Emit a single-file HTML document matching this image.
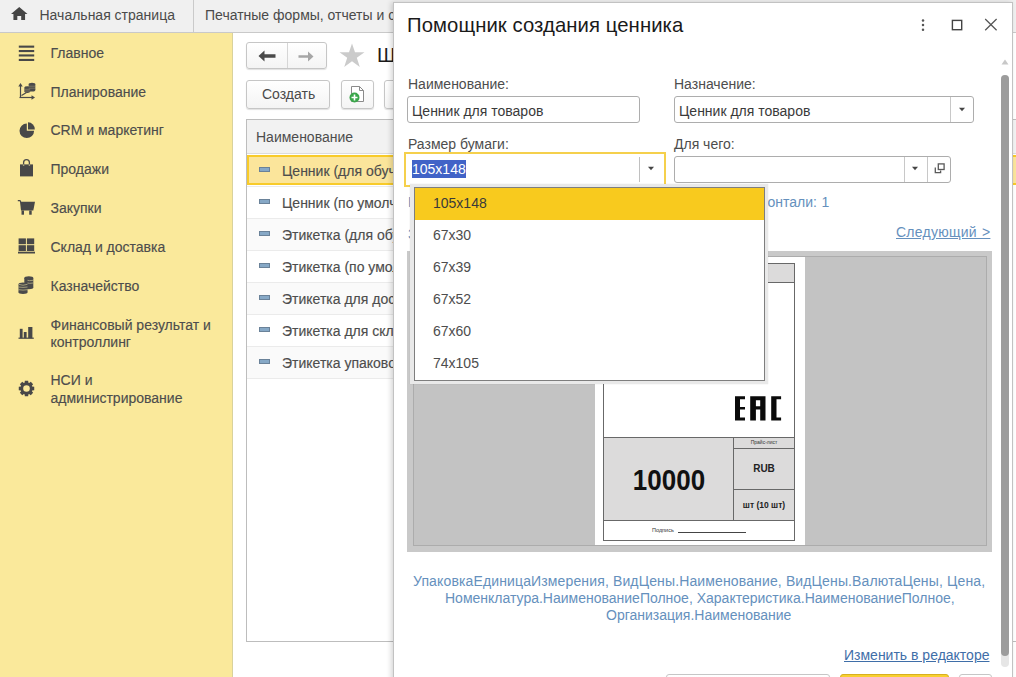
<!DOCTYPE html>
<html><head><meta charset="utf-8">
<style>
*{box-sizing:border-box;margin:0;padding:0}
html,body{width:1016px;height:677px;overflow:hidden;background:#fff;font-family:"Liberation Sans",sans-serif;font-size:14px;color:#4d4d4d}
.a{position:absolute}
.t{position:absolute;white-space:nowrap;line-height:16px;height:16px}
#topbar{left:0;top:0;width:1016px;height:33px;background:#f0f0f0;border-bottom:1px solid #c9c9c9}
#side{left:0;top:33px;width:233px;height:644px;background:#fae99b;border-right:1px solid #d9d29c}
.ic{position:absolute}
.btn{position:absolute;background:linear-gradient(#fff,#f4f4f4);border:1px solid #c6c6c6;border-radius:3px;box-shadow:0 1px 1px rgba(0,0,0,.12)}
.inp{position:absolute;background:#fff;border:1px solid #adadad;border-radius:3px}
.lbl{color:#4d4d4d}
.hv{-webkit-text-stroke:0.15px currentColor}
.dash{position:absolute;left:259px;width:11px;height:4.5px;background:#86a8c6;border:1px solid #6a8299}
</style></head><body>

<!-- TOP BAR -->
<div id="topbar" class="a"></div>
<svg class="ic" style="left:11px;top:7px" width="16.5" height="13.2" viewBox="0 0 17 14" preserveAspectRatio="none"><path d="M8.5 0 L17 7.5 L14.5 7.5 L14.5 14 L10.5 14 L10.5 9.5 L6.5 9.5 L6.5 14 L2.5 14 L2.5 7.5 L0 7.5 Z" fill="#454545"/></svg>
<div class="t" style="left:39.5px;top:6.5px;color:#4a4a4a">Начальная страница</div>
<div class="a" style="left:193px;top:0;width:1px;height:32px;background:#cacaca"></div>
<div class="t" style="left:205px;top:7px;color:#4a4a4a">Печатные формы, отчеты и с</div>

<!-- SIDEBAR -->
<div id="side" class="a"></div>
<div class="t hv" style="left:50.5px;top:45px">Главное</div>
<div class="t hv" style="left:50.5px;top:84px">Планирование</div>
<div class="t hv" style="left:50.5px;top:122px">CRM и маркетинг</div>
<div class="t hv" style="left:50.5px;top:161px">Продажи</div>
<div class="t hv" style="left:50.5px;top:200px">Закупки</div>
<div class="t hv" style="left:50.5px;top:239px">Склад и доставка</div>
<div class="t hv" style="left:50.5px;top:278px">Казначейство</div>
<div class="t hv" style="left:50.5px;top:317px">Финансовый результат и</div>
<div class="t hv" style="left:50.5px;top:334px">контроллинг</div>
<div class="t hv" style="left:50.5px;top:372px">НСИ и</div>
<div class="t hv" style="left:50.5px;top:390px">администрирование</div>


<!-- sidebar icons -->
<svg class="ic" style="left:18px;top:45px" width="17" height="16" viewBox="0 0 17 16"><g fill="#484848"><rect x="0.8" y="0.6" width="15.4" height="2.1"/><rect x="0.8" y="5" width="15.4" height="2.1"/><rect x="0.8" y="9.4" width="15.4" height="2.1"/><rect x="0.8" y="13.9" width="15.4" height="2.1"/></g></svg>
<svg class="ic" style="left:17px;top:81px" width="19" height="20" viewBox="0 0 19 20"><g fill="none" stroke="#4a4a4a" stroke-width="1.2"><path d="M3.5 4 V17"/><path d="M2.5 16.5 H15.5"/><path d="M4.5 14.5 L9.5 11.5"/></g><g fill="#4a4a4a"><path d="M1.3 5.5 L3.5 2 L5.7 5.5 Z"/><path d="M14.5 14.3 L18 16.5 L14.5 18.7 Z"/>
<rect x="11.7" y="3.3" width="6.6" height="5.7"/><ellipse cx="15" cy="3.3" rx="3.3" ry="1.5"/><ellipse cx="15" cy="9" rx="3.3" ry="1.5"/>
<rect x="7.4" y="6.6" width="5.8" height="4"/><ellipse cx="10.3" cy="6.6" rx="2.9" ry="1.4"/><ellipse cx="10.3" cy="10.6" rx="2.9" ry="1.4"/></g>
<g stroke="#9a9270" stroke-width="0.6"><path d="M11.7 5.2 H18.3 M11.7 7.2 H18.3 M7.4 8.3 H13.2 M7.4 10 H13.2"/></g></svg>
<svg class="ic" style="left:18px;top:122px" width="18" height="17" viewBox="0 0 18 17"><path d="M8.8 1.5 A7.3 7.3 0 1 0 16.1 8.8 L8.8 8.8 Z" fill="#484848"/><path d="M10 0.3 A6.8 6.8 0 0 1 16.8 7.4 L10 7.4 Z" fill="#484848"/></svg>
<svg class="ic" style="left:19px;top:158px" width="15" height="19" viewBox="0 0 15 19"><path d="M4.6 7 V4.6 A2.9 2.9 0 0 1 10.4 4.6 V7" fill="none" stroke="#4a4a4a" stroke-width="1.3"/><path d="M1 6.4 H14 V18.4 H1 Z" fill="#484848"/><path d="M3.9 6.4 h1.4 v1.3 h-1.4z M9.7 6.4 h1.4 v1.3 h-1.4z" fill="#c8c090"/></svg>
<svg class="ic" style="left:17px;top:200px" width="19" height="16" viewBox="0 0 19 16"><path d="M0.8 0.6 H3 L3.8 2" fill="none" stroke="#484848" stroke-width="1.2"/><path d="M3 1.8 H18 L16.3 10.5 H4 Z" fill="#484848"/><rect x="4.5" y="10.5" width="2.5" height="4.2" fill="#484848"/><rect x="12.2" y="10.5" width="2.5" height="4.2" fill="#484848"/></svg>
<svg class="ic" style="left:18px;top:238px" width="17" height="16" viewBox="0 0 17 16"><g fill="#484848"><rect x="0.6" y="0.4" width="7.3" height="5.8"/><rect x="8.9" y="0.4" width="7.3" height="5.8"/><rect x="0.6" y="7.2" width="7.3" height="5.8"/><rect x="8.9" y="7.2" width="7.3" height="5.8"/><rect x="0" y="13.7" width="17" height="1.8"/></g></svg>
<svg class="ic" style="left:18px;top:276px" width="16" height="18" viewBox="0 0 16 18"><g fill="#4a4a4a"><rect x="6.3" y="2" width="9" height="9.5"/><ellipse cx="10.8" cy="2" rx="4.5" ry="1.7"/><ellipse cx="10.8" cy="11.5" rx="4.5" ry="1.7"/></g><g fill="#4a4a4a"><rect x="0.5" y="8.3" width="9" height="8"/><ellipse cx="5" cy="8.3" rx="4.5" ry="1.7"/><ellipse cx="5" cy="16.3" rx="4.5" ry="1.7"/></g><g stroke="#c9c08e" stroke-width="0.7" fill="none"><path d="M9.5 4.3 Q10.8 5 15.3 4.3 M9.5 7 Q10.8 7.7 15.3 7 M0.5 11 Q5 11.8 9.5 11 M0.5 13.7 Q5 14.5 9.5 13.7"/><path d="M0.5 8.3 Q5 10.2 9.5 8.3"/></g></svg>
<svg class="ic" style="left:18px;top:326px" width="16" height="13" viewBox="0 0 16 13"><g fill="#484848"><rect x="1.8" y="2.8" width="2.8" height="9.4"/><rect x="5.8" y="6" width="2.8" height="6.2"/><rect x="10.2" y="1" width="4.2" height="11.2"/><rect x="0.5" y="11.6" width="15.3" height="1.2"/></g></svg>
<svg class="ic" style="left:18px;top:380px" width="17" height="17" viewBox="-8.5 -8.5 17 17"><path fill="#484848" fill-rule="evenodd" d="M5.68 -1.94 L7.73 -1.65 L7.73 1.65 L5.68 1.94 L5.39 2.64 L6.63 4.30 L4.30 6.63 L2.64 5.39 L1.94 5.68 L1.65 7.73 L-1.65 7.73 L-1.94 5.68 L-2.64 5.39 L-4.30 6.63 L-6.63 4.30 L-5.39 2.64 L-5.68 1.94 L-7.73 1.65 L-7.73 -1.65 L-5.68 -1.94 L-5.39 -2.64 L-6.63 -4.30 L-4.30 -6.63 L-2.64 -5.39 L-1.94 -5.68 L-1.65 -7.73 L1.65 -7.73 L1.94 -5.68 L2.64 -5.39 L4.30 -6.63 L6.63 -4.30 L5.39 -2.64 Z M3.3 0 A3.3 3.3 0 1 0 -3.3 0 A3.3 3.3 0 1 0 3.3 0 Z"/></svg>
<!-- MAIN -->
<div class="btn" style="left:246px;top:42px;width:81px;height:27px"></div>
<div class="a" style="left:287px;top:43px;width:1px;height:25px;background:#d6d6d6"></div>
<div class="btn" style="left:246px;top:79.5px;width:84px;height:29px"></div>
<div class="t" style="left:262px;top:86px;color:#4a4a4a">Создать</div>
<div class="btn" style="left:341px;top:79.5px;width:33px;height:29px"></div>
<div class="btn" style="left:384px;top:79.5px;width:33px;height:29px"></div>
<div class="t" style="left:377px;top:43px;font-size:20px;line-height:24px;height:24px;color:#1a1a1a">Ш</div>

<div class="a" style="left:246px;top:119px;width:800px;height:523px;border:1px solid #bdbdbd;background:#fff"></div>
<div class="a" style="left:247px;top:120px;width:800px;height:34px;background:#f2f2f2;border-bottom:1px solid #dcdcdc"></div>
<div class="t" style="left:256px;top:129px">Наименование</div>


<!-- nav arrows -->
<svg class="ic" style="left:258px;top:50px" width="18" height="12" viewBox="0 0 18 12"><path d="M0.5 6 L6.5 0.5 V4.3 H17.5 V7.7 H6.5 V11.5 Z" fill="#4a4a4a"/></svg>
<svg class="ic" style="left:298px;top:51px" width="16" height="11" viewBox="0 0 16 11"><path d="M15.5 5.5 L10 0.5 V4.2 H0.5 V6.8 H10 V10.5 Z" fill="#a6a6a6"/></svg>
<svg class="ic" style="left:339px;top:43px" width="26" height="25" viewBox="0 0 26 25"><path d="M13 0.5 L16 9.3 L25.5 9.3 L17.8 14.8 L20.8 24 L13 18.3 L5.2 24 L8.2 14.8 L0.5 9.3 L10 9.3 Z" fill="#cbcbcb"/></svg>
<!-- doc+ icon -->
<svg class="ic" style="left:349px;top:86px" width="17" height="17" viewBox="0 0 17 17"><path d="M2.5 0.5 H10.5 L14.5 4.5 V15.5 H2.5 Z" fill="#fff" stroke="#8a8a8a" stroke-width="1"/><path d="M10.5 0.5 V4.5 H14.5" fill="none" stroke="#8a8a8a"/><circle cx="5.5" cy="11.5" r="5" fill="#3aa64a"/><path d="M5.5 8.5 V14.5 M2.5 11.5 H8.5" stroke="#fff" stroke-width="1.6"/></svg>
<!-- table rows -->
<div class="a" style="left:247px;top:186px;width:146px;height:32px;background:#fff;border-top:1px solid #ebebeb"></div>
<div class="a" style="left:247px;top:218px;width:146px;height:32px;background:#fafafa;border-top:1px solid #ebebeb"></div>
<div class="a" style="left:247px;top:250px;width:146px;height:32px;background:#fff;border-top:1px solid #ebebeb"></div>
<div class="a" style="left:247px;top:282px;width:146px;height:32px;background:#fafafa;border-top:1px solid #ebebeb"></div>
<div class="a" style="left:247px;top:314px;width:146px;height:32px;background:#fff;border-top:1px solid #ebebeb"></div>
<div class="a" style="left:247px;top:346px;width:146px;height:32px;background:#fafafa;border-top:1px solid #ebebeb"></div>
<div class="a" style="left:247px;top:378px;width:146px;height:1px;background:#ebebeb"></div>
<div class="a" style="left:247px;top:155px;width:800px;height:30px;background:#fbe59b;border:2px solid #f8cb2a"></div>
<div class="dash" style="top:167px"></div>
<div class="dash" style="top:199px"></div>
<div class="dash" style="top:231px"></div>
<div class="dash" style="top:263px"></div>
<div class="dash" style="top:295px"></div>
<div class="dash" style="top:327px"></div>
<div class="dash" style="top:359px"></div>
<div class="t hv" style="left:282px;top:163px">Ценник (для обучения)</div>
<div class="t hv" style="left:282px;top:195px">Ценник (по умолчанию)</div>
<div class="t hv" style="left:282px;top:227px">Этикетка (для обучения)</div>
<div class="t hv" style="left:282px;top:259px">Этикетка (по умолчанию)</div>
<div class="t hv" style="left:282px;top:291px">Этикетка для доставки</div>
<div class="t hv" style="left:282px;top:323px">Этикетка для склада</div>
<div class="t hv" style="left:282px;top:355px">Этикетка упаковочная</div>
<!-- DIALOG -->
<div class="a" style="left:393px;top:2px;width:620px;height:680px;background:#fff;border:1px solid #c2c2c2;box-shadow:-2px 0 5px rgba(0,0,0,.16)"></div>
<div class="t" style="left:407px;top:12.5px;font-size:20.3px;letter-spacing:0.08px;line-height:24px;height:24px;color:#1a1a1a">Помощник создания ценника</div>


<!-- header icons -->
<svg class="ic" style="left:920px;top:18px" width="6" height="14" viewBox="0 0 6 14"><g fill="#555"><circle cx="3" cy="2.5" r="1.25"/><circle cx="3" cy="7.1" r="1.25"/><circle cx="3" cy="11.7" r="1.25"/></g></svg>
<svg class="ic" style="left:951px;top:19px" width="12" height="12" viewBox="0 0 12 12"><rect x="1.4" y="1.4" width="9.3" height="9.3" fill="none" stroke="#444" stroke-width="1.4"/></svg>
<svg class="ic" style="left:984px;top:18px" width="14" height="13" viewBox="0 0 14 13"><path d="M1.2 1 L12.6 12.2 M12.6 1 L1.2 12.2" stroke="#555" stroke-width="1.25"/></svg>
<!-- scrollbar -->
<svg class="ic" style="left:1001px;top:59px" width="8" height="6" viewBox="0 0 8 6"><path d="M0.5 5.5 L4 0.5 L7.5 5.5 Z" fill="#c8c8c8"/></svg>
<div class="a" style="left:1001px;top:75px;width:8px;height:592px;border-radius:4px;background:#e6e6e6"></div>
<div class="a" style="left:1001px;top:75px;width:8px;height:581px;border-radius:4px;background:#9c9c9c"></div>

<!-- fields -->
<div class="t" style="left:408px;top:76px">Наименование:</div>
<div class="t" style="left:674px;top:76px">Назначение:</div>
<div class="inp" style="left:407px;top:96px;width:233px;height:27px"></div>
<div class="t" style="left:412px;top:103px;color:#3a3a3a">Ценник для товаров</div>
<div class="inp" style="left:674px;top:96px;width:300px;height:27px"></div>
<div class="a" style="left:950px;top:97px;width:1px;height:25px;background:#c8c8c8"></div>
<svg class="ic" style="left:957.5px;top:106.5px" width="8" height="5" viewBox="0 0 8 5"><path d="M1 0.8 H7 L4 4.3 Z" fill="#454545"/></svg>
<div class="t" style="left:679px;top:103px;color:#3a3a3a">Ценник для товаров</div>

<div class="t" style="left:408px;top:136px">Размер бумаги:</div>
<div class="t" style="left:674px;top:136px">Для чего:</div>
<div class="a" style="left:404px;top:152px;width:262px;height:35px;background:#fff;border:2px solid #f5d04c"></div>
<div class="a" style="left:639px;top:157px;width:1px;height:25px;background:#c0c0c0"></div>
<svg class="ic" style="left:647px;top:166px" width="8" height="5" viewBox="0 0 8 5"><path d="M1 0.8 H7 L4 4.3 Z" fill="#454545"/></svg>
<div class="a" style="left:411.5px;top:159.5px;width:54px;height:18.5px;background:#4163c7"></div>
<div class="t" style="left:412px;top:161px;color:#fff">105x148</div>

<div class="inp" style="left:674px;top:156px;width:277px;height:27px"></div>
<div class="a" style="left:904px;top:157px;width:1px;height:25px;background:#c8c8c8"></div>
<div class="a" style="left:927px;top:157px;width:1px;height:25px;background:#c8c8c8"></div>
<svg class="ic" style="left:910.5px;top:166px" width="8" height="5" viewBox="0 0 8 5"><path d="M1 0.8 H7 L4 4.3 Z" fill="#454545"/></svg>
<svg class="ic" style="left:933px;top:162px" width="13" height="13" viewBox="0 0 13 13"><g fill="none" stroke="#5a5a5a" stroke-width="1.3"><rect x="5.3" y="1.9" width="5.8" height="5.6"/><path d="M2.3 5.6 V10.6 H7.6 V8.6"/></g></svg>

<div class="t" style="left:408px;top:194px;color:#6590bd;word-spacing:0.6px">На листе ценников по вертикали: 1, ценников по горизонтали: 1</div>
<div class="t" style="left:408px;top:226px;color:#6590bd">Заполнено полей: 7</div>
<div class="t" style="left:896px;top:224px;color:#6590bd;text-decoration:underline;letter-spacing:0.25px;word-spacing:1px">Следующий &gt;</div>

<!-- preview -->
<div class="a" style="left:407px;top:251px;width:585px;height:301px;background:#c9c9c9"></div>
<div class="a" style="left:413px;top:256px;width:574px;height:290px;background:#c3c3c3;border:1px solid #acacac"></div>
<div class="a" style="left:595px;top:257px;width:210px;height:288px;background:#fff"></div>
<div class="a" style="left:603px;top:263px;width:192px;height:278px;border:1px solid #686868;background:#fff"></div>
<div class="a" style="left:604px;top:264px;width:190px;height:19px;background:#dcdbdb;border-bottom:1px solid #686868"></div>
<div class="a" style="left:604px;top:437px;width:130px;height:84px;background:#dcdbdb;border-top:1px solid #686868;border-bottom:1px solid #686868;border-right:1px solid #686868"></div>
<div class="a" style="left:734px;top:437px;width:60px;height:84px;background:#dcdbdb;border-top:1px solid #686868;border-bottom:1px solid #686868"></div>
<div class="a" style="left:734px;top:448px;width:60px;height:1px;background:#686868"></div>
<div class="a" style="left:734px;top:489px;width:60px;height:1px;background:#686868"></div>
<div class="t" style="left:733px;top:437px;width:62px;text-align:center;font-size:5px;line-height:10px;height:10px;color:#333">Прайс-лист</div>
<div class="t" style="left:733px;top:462px;width:62px;text-align:center;font-size:10px;font-weight:bold;line-height:14px;height:14px;color:#222">RUB</div>
<div class="t" style="left:733px;top:499px;width:62px;text-align:center;font-size:8.5px;font-weight:bold;line-height:12px;height:12px;color:#222">шт (10 шт)</div>
<div class="t" style="left:604px;top:463.5px;width:130px;text-align:center;font-size:26px;font-weight:bold;line-height:32px;height:32px;color:#111;transform:scaleY(1.12)">10000</div>
<div class="t" style="left:652px;top:526px;font-size:5.5px;line-height:8px;height:8px;color:#333">Подпись</div>
<div class="a" style="left:678px;top:532px;width:68px;height:1px;background:#444"></div>
<svg class="ic" style="left:734px;top:396px" width="48" height="26" viewBox="0 0 48 26"><g fill="#0a0a0a"><path d="M1 0.3 H11 V3.3 H6 V11 H11 V13.6 H6 V21.6 H11 V24.5 H1 Z"/><path d="M16.2 0.3 H31.5 V24.5 H26.2 V13.6 H21.9 V24.5 H16.2 Z M21.9 4.3 V10.3 H26.2 V4.3 Z"/><path d="M37.2 0.3 H47.1 V3.3 H42.5 V21.6 H47.1 V24.5 H37.2 Z"/></g></svg>

<!-- description -->
<div class="t" style="left:413px;top:573px;color:#6590bd;letter-spacing:0.135px">УпаковкаЕдиницаИзмерения, ВидЦены.Наименование, ВидЦены.ВалютаЦены, Цена,</div>
<div class="t" style="left:445px;top:590px;color:#6590bd">Номенклатура.НаименованиеПолное, Характеристика.НаименованиеПолное,</div>
<div class="t" style="left:606px;top:607px;color:#6590bd">Организация.Наименование</div>
<div class="t" style="left:844px;top:647px;color:#3f6ea8;text-decoration:underline">Изменить в редакторе</div>

<!-- buttons bottom -->
<div class="btn" style="left:666px;top:674px;width:164px;height:28px"></div>
<div class="a" style="left:840px;top:674px;width:109px;height:28px;background:#f8d030;border:1px solid #d8b020;border-radius:3px"></div>
<div class="btn" style="left:959px;top:674px;width:33px;height:28px"></div>

<!-- popup -->
<div class="a" style="left:410px;top:184px;width:358px;height:200px;background:#e9e9e9;box-shadow:0 0 1px rgba(0,0,0,.15)"></div>
<div class="a" style="left:413.5px;top:187px;width:351px;height:194px;background:#fff;border:1.5px solid #7e7e7e"></div>
<div class="a" style="left:415px;top:188px;width:349px;height:32px;background:#f8ca1e"></div>
<div class="t" style="left:433px;top:195px;color:#3a3a3a">105x148</div>
<div class="t" style="left:433px;top:227px">67x30</div>
<div class="t" style="left:433px;top:259px">67x39</div>
<div class="t" style="left:433px;top:291px">67x52</div>
<div class="t" style="left:433px;top:323px">67x60</div>
<div class="t" style="left:433px;top:355px">74x105</div>
</body></html>
